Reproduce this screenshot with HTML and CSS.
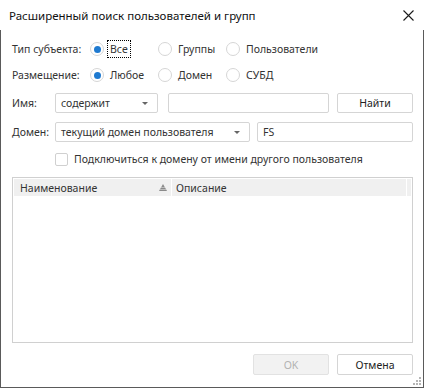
FILE: index.html
```html
<!DOCTYPE html>
<html lang="ru">

<head>
    <meta charset="utf-8">
    <title>Расширенный поиск пользователей и групп</title>
    <link rel="stylesheet" href="styles.css">
</head>

<body>
    <div class="dialog">
        <div class="titlebar">
            <span class="title">Расширенный поиск пользователей и групп</span>
            <svg class="close" width="11" height="11" viewBox="0 0 11 11">
                <path d="M0.5 0.5 L10.5 10.5 M10.5 0.5 L0.5 10.5" stroke="#1a1a1a" stroke-width="1.1" fill="none"/>
            </svg>
        </div>

        <div class="content">
            <div class="row radios">
                <span class="label wide">Тип субъекта:</span>
                <span class="option"><span class="radio checked"></span><span class="focus">Все</span></span>
                <span class="option"><span class="radio"></span>Группы</span>
                <span class="option last"><span class="radio"></span>Пользователи</span>
            </div>

            <div class="row radios second">
                <span class="label wide">Размещение:</span>
                <span class="option"><span class="radio checked"></span>Любое</span>
                <span class="option"><span class="radio"></span>Домен</span>
                <span class="option last"><span class="radio"></span>СУБД</span>
            </div>

            <div class="row fields">
                <span class="label short">Имя:</span>
                <div class="combo name-combo">содержит<span class="arrow"></span></div>
                <div class="input name-input"></div>
                <button class="btn find">Найти</button>
            </div>

            <div class="row fields domain">
                <span class="label short">Домен:</span>
                <div class="combo domain-combo">текущий домен пользователя<span class="arrow"></span></div>
                <div class="input domain-input">FS</div>
            </div>

            <div class="row check">
                <span class="checkbox"></span>
                <span>Подключиться к домену от имени другого пользователя</span>
            </div>

            <div class="table">
                <div class="thead">
                    <div class="th col-name">Наименование
                        <svg class="sort" width="8" height="7" viewBox="0 0 8 7">
                            <path d="M4 0 L8 7 L0 7 Z" fill="#8a8a8a"/>
                            <path d="M2 3.5 H6 M1 5.5 H7" stroke="#c8c8c8" stroke-width="0.8"/>
                        </svg>
                    </div>
                    <div class="th col-desc">Описание</div>
                    <div class="th col-rest"></div>
                </div>
            </div>

            <div class="buttons">
                <button class="btn ok" disabled>OK</button>
                <button class="btn">Отмена</button>
            </div>

            <svg class="grip" width="8" height="8" viewBox="0 0 8 8">
                <rect x="6" y="0" width="2" height="2" fill="#b5b5b5"/>
                <rect x="3" y="3" width="2" height="2" fill="#b5b5b5"/>
                <rect x="6" y="3" width="2" height="2" fill="#b5b5b5"/>
                <rect x="0" y="6" width="2" height="2" fill="#b5b5b5"/>
                <rect x="3" y="6" width="2" height="2" fill="#b5b5b5"/>
                <rect x="6" y="6" width="2" height="2" fill="#b5b5b5"/>
            </svg>
        </div>
    </div>
</body>

</html>
```

FILE: styles.css
```css
* {
    margin: 0;
    box-sizing: border-box;
}

body {
    background: #ffffff;
    font-family: 'Noto Sans', 'Open Sans', sans-serif;
    font-size: 10.5px;
    color: #333333;
}

.dialog {
    width: 424px;
    height: 388px;
    display: flex;
    flex-direction: column;
    background: #ffffff;
}

.titlebar {
    height: 30px;
    display: flex;
    align-items: center;
    justify-content: space-between;
    padding: 0 10px 0 9px;
}

.title {
    font-size: 11.5px;
    color: #111111;
}

.close {
    margin-top: 1px;
}

.content {
    flex: 1;
    position: relative;
    display: flex;
    flex-direction: column;
    border: 1px solid #5a5a5a;
    border-top: none;
    padding: 9px 10px 0 11px;
}

.row {
    height: 20px;
    display: flex;
    align-items: center;
}

.second {
    margin-top: 6px;
}

.fields {
    margin-top: 8px;
}

.domain {
    margin-top: 9px;
}

.check {
    margin-top: 7px;
}

.label {
    flex-shrink: 0;
}

.label.wide {
    width: 78px;
}

.label.short {
    width: 43px;
}

.option {
    width: 68px;
    flex-shrink: 0;
    display: flex;
    align-items: center;
}

.option.last {
    width: auto;
}

.radio {
    width: 14px;
    height: 14px;
    flex-shrink: 0;
    border: 1px solid #d6d6d6;
    border-radius: 50%;
    margin-right: 6px;
    display: flex;
    align-items: center;
    justify-content: center;
}

.radio.checked::after {
    content: "";
    width: 7px;
    height: 7px;
    border-radius: 50%;
    background: #1f7ad0;
}

.focus {
    outline: 1px dotted #000000;
    outline-offset: 1px;
    padding: 0 1px;
    margin-left: -1px;
}

.combo,
.input {
    height: 20px;
    flex-shrink: 0;
    border: 1px solid #d5d5d5;
    border-radius: 2px;
    padding: 0 5px;
    display: flex;
    align-items: center;
    position: relative;
    color: #333333;
}

.arrow {
    position: absolute;
    right: 9px;
    top: 8px;
    border-left: 3px solid transparent;
    border-right: 3px solid transparent;
    border-top: 3px solid #666666;
}

.name-combo {
    width: 103px;
}

.name-input {
    width: 161px;
    margin-left: 10px;
}

.domain-combo {
    width: 195px;
}

.domain-input {
    width: 156px;
    margin-left: 7px;
}

.btn {
    height: 21px;
    width: 76px;
    flex-shrink: 0;
    background: #ffffff;
    border: 1px solid #d5d5d5;
    border-radius: 2px;
    font-family: 'Noto Sans', 'Open Sans', sans-serif;
    font-size: 10.5px;
    color: #222222;
    padding: 0;
}

.find {
    height: 20px;
    margin-left: 8px;
}

.checkbox {
    width: 13px;
    height: 13px;
    flex-shrink: 0;
    border: 1px solid #d0d0d0;
    border-radius: 2px;
    margin-left: 43px;
    margin-right: 6px;
}

.table {
    margin-top: 8px;
    width: 401px;
    height: 166px;
    border: 1px solid #d0d0d0;
    padding: 1px;
}

.thead {
    display: flex;
    height: 17px;
}

.th {
    background: #f0f0f0;
    display: flex;
    align-items: center;
    color: #333333;
}

.col-name {
    width: 157px;
    padding-left: 6px;
    position: relative;
}

.sort {
    position: absolute;
    right: 4px;
    top: 5px;
}

.col-desc {
    width: 234px;
    margin-left: 1px;
    padding-left: 4px;
}

.col-rest {
    width: 4px;
    margin-left: 1px;
}

.buttons {
    display: flex;
    justify-content: flex-end;
    gap: 8px;
    margin-top: 11px;
}

.btn.ok {
    background: #f2f2f2;
    border-color: #e2e2e2;
    color: #b2b2b2;
}

.grip {
    position: absolute;
    right: 2px;
    bottom: 2px;
}
```
